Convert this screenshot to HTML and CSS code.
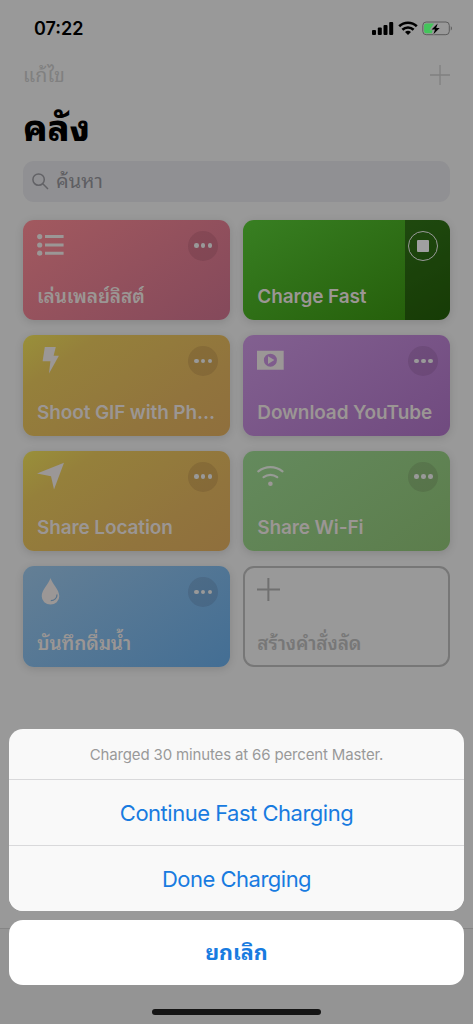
FILE: index.html
```
<!DOCTYPE html>
<html lang="th">
<head>
<meta charset="utf-8">
<meta name="viewport" content="width=device-width">
<title>คลัง</title>
<link rel="stylesheet" href="styles.css">
</head>
<body>
<main class="phone">
  <header class="status">
    <span class="time">07:22</span>
    <svg class="status-icons" width="84" height="18" viewBox="0 0 84 18">
      <rect x="1" y="10" width="4" height="5" rx="1"/><rect x="6.8" y="7.5" width="4" height="7.5" rx="1"/><rect x="12.5" y="5" width="4" height="10" rx="1"/><rect x="18.2" y="2" width="4" height="13" rx="1"/>
      <path d="M28.2 6.2a12.8 12.8 0 0 1 17.6 0M31.4 9.7a8.2 8.2 0 0 1 11.2 0" fill="none" stroke="#000" stroke-width="2.6"/>
      <path d="M34 12a4.6 4.6 0 0 1 6 0l-3 3z"/>
      <rect x="51.8" y="2" width="26.5" height="12.7" rx="3.4" fill="none" stroke="#5c5c5c" stroke-width="1"/>
      <path d="M55 3.5h8l-3.8 5.5h2.6l-1 4.2H55a1.9 1.9 0 0 1-1.9-1.9v-6A1.9 1.9 0 0 1 55 3.5z" fill="#43c55b"/>
      <path d="M79.8 6.3c1.4.6 1.4 3.6 0 4.2z" fill="#555"/>
      <path d="M66.7 3.5l-6.2 6h3.5l-1.6 4.7 6.3-6.2h-3.5z" stroke="#999" stroke-width="1.6" paint-order="stroke"/>
    </svg>
  </header>
  <nav class="nav">
    <span>แก้ไข</span>
    <svg width="20" height="20" viewBox="0 0 20 20"><path d="M10 0v20M0 10h20"/></svg>
  </nav>
  <h1 class="title">คลัง</h1>
  <div class="search">
    <svg width="17" height="17" viewBox="0 0 17 17"><circle cx="6.6" cy="6.6" r="5.7"/><path d="M10.8 10.8l5.2 5.2"/></svg>
    <span>ค้นหา</span>
  </div>
  <section class="grid">
    <article class="card pink">
      <div class="card-top">
        <svg class="icon" width="27" height="30" viewBox="0 0 27 30"><circle cx="2.7" cy="5.6" r="2.6"/><circle cx="2.7" cy="14" r="2.6"/><circle cx="2.7" cy="22.2" r="2.6"/><path d="M8 4.1h18.6v3H8zM8 12.5h18.6v3H8zM8 20.7h18.6v3H8z"/></svg>
        <span class="more"><i></i><i></i><i></i></span>
      </div>
      <h2>เล่นเพลย์ลิสต์</h2>
    </article>
    <article class="card green">
      <div class="card-top end"><span class="stop"><i></i></span></div>
      <h2>Charge Fast</h2>
    </article>
    <article class="card yellow">
      <div class="card-top">
        <svg class="icon" width="27" height="30" viewBox="0 0 27 30"><path d="M7.8 1h11l-2.2 8.8h5.3L12 27.6l1.4-12.4H5.6z"/></svg>
        <span class="more"><i></i><i></i><i></i></span>
      </div>
      <h2>Shoot GIF with Ph...</h2>
    </article>
    <article class="card purple">
      <div class="card-top">
        <svg class="icon" width="27" height="30" viewBox="0 0 27 30"><path fill-rule="evenodd" d="M0 4.7h26.7v19H0zM13.4 7.7a6.5 6.5 0 1 0 0 13 6.5 6.5 0 0 0 0-13z"/><path d="M11 10.3l6.4 3.8-6.4 3.8z"/></svg>
        <span class="more"><i></i><i></i><i></i></span>
      </div>
      <h2>Download YouTube</h2>
    </article>
    <article class="card yellow">
      <div class="card-top">
        <svg class="icon" width="27" height="30" viewBox="0 0 27 30"><path d="M27 .8L17 27.5 14 14.3 0 11.6z"/></svg>
        <span class="more"><i></i><i></i><i></i></span>
      </div>
      <h2>Share Location</h2>
    </article>
    <article class="card lime">
      <div class="card-top">
        <svg class="icon" width="27" height="30" viewBox="0 0 27 30"><path d="M1.3 9.4a19 19 0 0 1 24.2 0M6.6 15.2a10.8 10.8 0 0 1 13.6 0" fill="none" stroke="#979b95" stroke-width="2.2" stroke-linecap="round"/><circle cx="13.4" cy="21.8" r="2.3"/></svg>
        <span class="more"><i></i><i></i><i></i></span>
      </div>
      <h2>Share Wi-Fi</h2>
    </article>
    <article class="card blue">
      <div class="card-top">
        <svg class="icon" width="27" height="30" viewBox="0 0 27 30"><path d="M13.5 1C12 6.5 4.7 12.5 4.7 19.2a8.8 8.4 0 0 0 17.6 0C22.3 12.5 15 6.5 13.5 1z"/><path d="M20 17.5c.2 3.5-2.7 6.2-6.2 6.2" fill="none" stroke="#58738b" stroke-width="1.2"/></svg>
        <span class="more"><i></i><i></i><i></i></span>
      </div>
      <h2>บันทึกดื่มน้ำ</h2>
    </article>
    <article class="card create">
      <svg width="23" height="23" viewBox="0 0 23 23"><path d="M11.4 0v23M0 11.5h23"/></svg>
      <h2>สร้างคำสั่งลัด</h2>
    </article>
  </section>
  <footer class="tabbar"><span class="home"></span></footer>
</main>
<aside class="sheet">
  <div class="options">
    <p>Charged 30 minutes at 66 percent Master.</p>
    <button>Continue Fast Charging</button>
    <button>Done Charging</button>
  </div>
  <button class="cancel">ยกเลิก</button>
</aside>
</body>
</html>
```
FILE: styles.css
```
* { box-sizing: border-box; }
body {
  margin: 0;
  position: relative;
  height: 1024px;
  overflow: hidden;
  background: #999;
  color: #000;
  font-family: Inter, "Noto Sans Thai Looped", "Noto Looped Thai", Loma, "Noto Sans Thai", "Noto Sans", sans-serif;
}
h1, h2, p { margin: 0; }
button { border: 0; padding: 0; font-family: inherit; color: #187be0; }
.phone { height: 1024px; display: flex; flex-direction: column; padding: 0 23px; }
.status { height: 56px; display: flex; justify-content: space-between; padding: 19px 0 0 11px; }
.time { font-size: 18px; line-height: 20px; font-weight: 600; }
.status-icons { margin: 1px -5px 0 0; }
.nav { height: 38px; display: flex; align-items: center; justify-content: space-between; color: #808080; font-size: 19.5px; }
.nav span { padding-bottom: 4px; }
.nav svg { fill: none; stroke: #808080; stroke-width: 1.3; }
.title { height: 67px; line-height: 69px; font-size: 36px; font-weight: 800; }
.search {
  height: 41px;
  flex: none;
  display: flex;
  align-items: center;
  gap: 7px;
  padding-left: 9px;
  border-radius: 11px;
  background: #909093;
  color: #5e5e62;
  font-size: 20px;
}
.search span { padding-bottom: 6px; }
.search svg { fill: none; stroke: #626266; stroke-width: 1.5; }
.grid {
  display: grid;
  grid-template-columns: 206.7px 206.7px;
  grid-auto-rows: 100.5px;
  gap: 15px 13.6px;
  margin-top: 17.6px;
}
.card {
  display: flex;
  flex-direction: column;
  justify-content: space-between;
  padding: 11px 11.5px 11px 14px;
  border-radius: 11px;
  box-shadow: 0 2px 8px rgba(0, 0, 0, .13);
  color: #9b9694;
  fill: #9b9796;
}
.card h2 {
  font-size: 19px;
  line-height: 25px;
  font-weight: 600;
  letter-spacing: -.12px;
  white-space: nowrap;
}
.card-top { height: 30px; display: flex; justify-content: space-between; }
.end { justify-content: flex-end; }
.more, .stop { width: 30px; height: 30px; border-radius: 50%; display: flex; align-items: center; justify-content: center; gap: 2.3px; }
.more { background: rgba(30, 10, 20, .1); }
.more i { width: 4.6px; height: 4.6px; border-radius: 50%; background: #999; }
.stop { border: 1.3px solid #999; }
.stop i { width: 12px; height: 12px; border-radius: 1px; background: #a0a0a0; }
.pink { background: linear-gradient(145deg, #a2595f, #84495b); }
.green { background: linear-gradient(90deg, transparent 162px, rgba(0, 0, 0, .35) 162px), linear-gradient(150deg, #387f22, #235b08); }
.yellow { background: linear-gradient(145deg, #99903a 0, #95803b 22%, #91743d 70%, #8f6f3d 100%); }
.purple { background: linear-gradient(145deg, #826090, #704a7f); }
.lime { background: linear-gradient(145deg, #648a5d, #5c7d4c); }
.blue { background: linear-gradient(145deg, #647f95, #436e94); }
.create { border: 2px solid #777; padding: 10px 12px 9px 12px; box-shadow: none; color: #777; }
.create svg { fill: none; stroke: #707070; stroke-width: 2; }
.tabbar {
  height: 96px;
  margin: auto -23px 0;
  border-top: 1px solid #858585;
  background: #949494;
  display: flex;
  align-items: flex-end;
  justify-content: center;
  padding-bottom: 9px;
}
.home { width: 169px; height: 6px; border-radius: 3px; background: #151515; }
.sheet { position: absolute; inset: 729px 9px 39px; display: flex; flex-direction: column; gap: 9px; text-align: center; }
.options { height: 182px; display: grid; grid-template-rows: 50px 66px 66px; border-radius: 14px; overflow: hidden; background: #f9f9f9; }
.options p { font-size: 15px; line-height: 51px; letter-spacing: -.15px; color: #999; }
.options button { border-top: 1px solid #d9d9db; background: #f9f9f9; font-size: 22px; letter-spacing: -.5px; }
.cancel { height: 65px; padding-bottom: 5px; border-radius: 14px; background: #fff; font-size: 21.5px; font-weight: 700; }
```
